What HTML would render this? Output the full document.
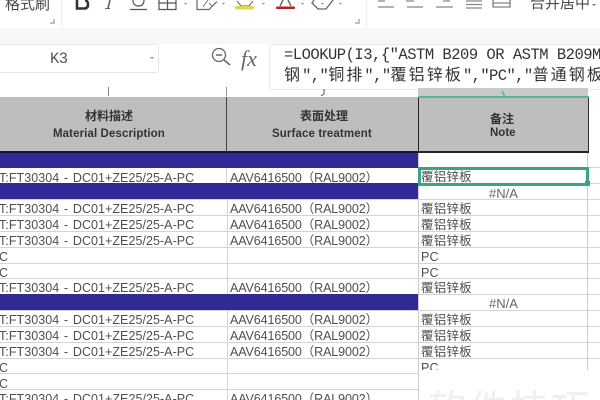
<!DOCTYPE html>
<html><head><meta charset="utf-8">
<style>
html,body{margin:0;padding:0;background:#fff;width:600px;height:400px;overflow:hidden}
#p{position:relative;width:600px;height:400px;overflow:hidden;background:#fff;font-family:"Liberation Sans","Noto Sans CJK SC",sans-serif;filter:blur(.35px)}
#p div{position:absolute;white-space:nowrap}
.m{font-family:"Liberation Mono","Noto Sans CJK SC",monospace;color:#333}
.m span{font-size:16px;letter-spacing:2.1px}
.h{background:#d4d4d4;height:1px;left:0}
.v{background:#d4d4d4;width:1px}
.b{background:#2f2a94;left:0;width:419px}
.a{left:-1px;margin-top:1px;font-size:12.5px;line-height:16px;color:#4f4f4f;letter-spacing:.05px;word-spacing:1.2px;width:225px;overflow:hidden}
.c{left:230px;margin-top:1px;font-size:12.5px;line-height:16px;color:#4f4f4f;letter-spacing:-.1px}
.n{left:421px;margin-top:1px;font-size:12.5px;line-height:16px;color:#4f4f4f;letter-spacing:.2px}
.e{left:489px;font-size:13px;line-height:16px;color:#666}
.t{font-size:11.5px;line-height:14px;font-weight:700;color:#333}
</style></head><body><div id="p">

<!-- ribbon -->
<div style="left:0;top:28px;width:600px;height:16px;background:#f7f7f7"></div>
<div style="left:0;top:0;width:600px;height:28px;background:#fff"></div>
<div style="left:5px;top:-4px;font-size:15px;line-height:18px;color:#4a4a4a">格式刷</div>
<div style="left:61px;top:0;width:1px;height:27px;background:#eee"></div>
<div style="left:366px;top:0;width:1px;height:27px;background:#eee"></div>
<svg style="position:absolute;left:0;top:0" width="600" height="30" fill="none">
<path d="M54 19v4h-4" stroke="#aaa" stroke-width="1.500"/><path d="M359 19v4h-4" stroke="#aaa" stroke-width="1.500"/>
<path d="M77 0v8.500h7q4 0 4-4t-3-4" stroke="#333" stroke-width="2.600"/>
<path d="M110 0l-2 8" stroke="#666" stroke-width="1.600"/><path d="M105 8.500h5" stroke="#666"/>
<path d="M133 0q0 6 5.500 6t5.500-6" stroke="#555" stroke-width="1.200"/><path d="M130 9.500h17" stroke="#555" stroke-width="1.200"/>
<path d="M159 0v9.500h17V0M159 3h17M167.500 0v9.500" stroke="#555" stroke-width="1.200"/>
<path d="M184 3l1.500 1.500L187 3z" fill="#777"/>
<path d="M197 0v9.500h12l8-8" stroke="#666" stroke-width="1.200"/><path d="M203 7l5-7M209 3l3 3" stroke="#777"/>
<path d="M222 3l1.500 1.500L225 3z" fill="#777"/>
<path d="M237 1l4 5h8l4-5" stroke="#777" stroke-width="1.200"/>
<rect x="235" y="6" width="19" height="3.500" rx="1.500" fill="#ded84e"/>
<path d="M262 3l1.500 1.500L265 3z" fill="#777"/>
<path d="M280 6l3-6M291 6l-3-6" stroke="#666" stroke-width="1.400"/>
<rect x="276" y="6.500" width="19" height="2.500" rx="1" fill="#b8202c"/>
<path d="M301 3l1.500 1.500L304 3z" fill="#777"/>
<path d="M314 0l-2 3 6 6h8l7-9" stroke="#666" stroke-width="1.300"/>
<path d="M321 3l1.500 1.500L324 3z" fill="#777"/>
<path d="M339 3l1.500 1.500L342 3z" fill="#777"/>
<path d="M385 1h-7M378 7h16M406 1h8M407 7h16M443 1h7M436 7h17M466 1h16M466 4.500h16M466 8h16" stroke="#888" stroke-width="1.300"/>
<path d="M493 0v7h17V0M493 3h17" stroke="#666" stroke-width="1.100"/>
<path d="M592 4l2 2 2-2z" fill="#777"/>
</svg>
<div style="left:530px;top:-5px;font-size:15px;line-height:18px;color:#4a4a4a">合并居中</div>

<!-- formula bar -->
<div style="left:0;top:44px;width:600px;height:53px;background:#fff"></div>
<div style="left:-3px;top:44px;width:160px;height:27px;border:1px solid #e6e6e6;border-radius:3px;background:#fff"></div>
<div style="left:50px;top:51px;font:15.5px/16px 'Liberation Mono',monospace;letter-spacing:-.5px;color:#555">K3</div>
<svg style="position:absolute;left:0;top:44px" width="270" height="30" fill="none">
<path d="M150 13l2 2 2-2z" fill="#888"/>
<circle cx="219" cy="11" r="6.500" stroke="#666" stroke-width="1.300"/>
<path d="M216 11h6M224 16l6 5" stroke="#666" stroke-width="1.500"/>
</svg>
<div style="left:241px;top:47px;font:italic 22px/24px 'Liberation Serif',serif;color:#666">fx</div>
<div style="left:269px;top:44px;width:340px;height:44px;border:1px solid #e8e8e8;border-radius:3px"></div>
<div class="m" style="left:284px;top:45px;font-size:15.5px;line-height:20px;letter-spacing:-.5px">=LOOKUP(I3,{"ASTM B209 OR ASTM B209M</div>
<div class="m" style="left:284px;top:66px;font-size:15.5px;line-height:20px;letter-spacing:-.6px"><span>钢</span>","<span>铜排</span>","<span>覆铝锌板</span>","PC","<span>普通钢板</span></div>

<!-- col header strip -->
<div style="left:418px;top:88px;width:170px;height:9px;background:#c9cbca"></div>
<div style="left:108px;top:87px;width:1px;height:9px;background:#888"></div>
<div style="left:226px;top:87px;width:1px;height:9px;background:#999"></div>
<svg style="position:absolute;left:318px;top:88px" width="10" height="9" fill="none"><path d="M6 1v5l-3 2" stroke="#555"/></svg>

<!-- table header -->
<div style="left:0;top:97px;width:588px;height:54px;background:#bfbebe"></div>
<div style="left:226px;top:97px;width:1px;height:54px;background:#444"></div>
<div style="left:418px;top:96px;width:1px;height:56px;background:#222"></div>
<div style="left:588px;top:98px;width:1px;height:54px;background:#333"></div>
<div style="left:0;top:151px;width:589px;height:2px;background:#14143f"></div>
<div style="left:418px;top:151px;width:171px;height:2px;background:#222"></div>
<div style="left:418px;top:96px;width:171px;height:2px;background:#55b597"></div>
<svg style="position:absolute;left:498px;top:90px" width="12" height="8" fill="none"><path d="M4 1l3 6" stroke="#55b597" stroke-width="1.500"/></svg>

<div class="t" style="left:85px;top:109px;font-size:12px">材料描述</div>
<div class="t" style="left:53px;top:127px;letter-spacing:.1px">Material Description</div>
<div class="t" style="left:300px;top:109px;font-size:12px">表面处理</div>
<div class="t" style="left:272px;top:127px;letter-spacing:.12px">Surface treatment</div>
<div class="t" style="left:490px;top:112px;font-size:12px">备注</div>
<div class="t" style="left:490px;top:126px">Note</div>

<!-- blue bars -->
<div class="b" style="top:153px;height:15px"></div>
<div class="b" style="top:183px;height:16px"></div>
<div class="b" style="top:294px;height:17px"></div>

<!-- grid horizontal -->
<div class="h" style="top:167px;left:419px;width:181px"></div>
<div class="h" style="top:183px;width:181px;left:419px"></div>
<div class="h" style="top:199px;width:600px"></div>
<div class="h" style="top:215px;width:600px"></div>
<div class="h" style="top:231px;width:600px"></div>
<div class="h" style="top:247px;width:600px"></div>
<div class="h" style="top:263px;width:600px"></div>
<div class="h" style="top:278px;width:600px"></div>
<div class="h" style="top:294px;left:419px;width:181px"></div>
<div class="h" style="top:310px;width:600px"></div>
<div class="h" style="top:326px;width:600px"></div>
<div class="h" style="top:342px;width:600px"></div>
<div class="h" style="top:358px;width:600px"></div>
<div class="h" style="top:373px;width:419px"></div>
<div class="h" style="top:389px;width:419px"></div>

<!-- grid vertical -->
<div class="v" style="left:227px;top:199px;height:95px"></div>
<div class="v" style="left:227px;top:311px;height:89px"></div>
<div class="v" style="left:226px;top:168px;height:15px"></div>
<div class="v" style="left:418px;top:153px;height:247px;background:#ccc"></div>
<div class="v" style="left:587px;top:153px;height:217px;background:#ccc"></div>

<!-- rows -->
<div class="a" style="top:169px">T:FT30304 - DC01+ZE25/25-A-PC</div>
<div class="c" style="top:169px">AAV6416500（RAL9002）</div>
<div class="n" style="top:168px">覆铝锌板</div>
<div class="e" style="top:186px">#N/A</div>

<div class="a" style="top:200px">T:FT30304 - DC01+ZE25/25-A-PC</div>
<div class="c" style="top:200px">AAV6416500（RAL9002）</div>
<div class="n" style="top:200px">覆铝锌板</div>
<div class="a" style="top:216px">T:FT30304 - DC01+ZE25/25-A-PC</div>
<div class="c" style="top:216px">AAV6416500（RAL9002）</div>
<div class="n" style="top:216px">覆铝锌板</div>
<div class="a" style="top:232px">T:FT30304 - DC01+ZE25/25-A-PC</div>
<div class="c" style="top:232px">AAV6416500（RAL9002）</div>
<div class="n" style="top:232px">覆铝锌板</div>
<div class="a" style="top:248px">C</div><div class="n" style="top:248px">PC</div>
<div class="a" style="top:264px">C</div><div class="n" style="top:264px">PC</div>
<div class="a" style="top:279px">T:FT30304 - DC01+ZE25/25-A-PC</div>
<div class="c" style="top:279px">AAV6416500（RAL9002）</div>
<div class="n" style="top:279px">覆铝锌板</div>
<div class="e" style="top:296px">#N/A</div>

<div class="a" style="top:311px">T:FT30304 - DC01+ZE25/25-A-PC</div>
<div class="c" style="top:311px">AAV6416500（RAL9002）</div>
<div class="n" style="top:311px">覆铝锌板</div>
<div class="a" style="top:327px">T:FT30304 - DC01+ZE25/25-A-PC</div>
<div class="c" style="top:327px">AAV6416500（RAL9002）</div>
<div class="n" style="top:327px">覆铝锌板</div>
<div class="a" style="top:343px">T:FT30304 - DC01+ZE25/25-A-PC</div>
<div class="c" style="top:343px">AAV6416500（RAL9002）</div>
<div class="n" style="top:343px">覆铝锌板</div>
<div class="a" style="top:359px">C</div><div class="n" style="top:359px">PC</div>
<div class="a" style="top:375px">C</div>
<div class="a" style="top:390px">T:FT30304 - DC01+ZE25/25-A-PC</div>
<div class="c" style="top:390px">AAV6416500（RAL9002）</div>

<!-- selection -->
<div style="left:418px;top:167px;width:165px;height:13px;border:3px solid #35a584"></div>
<div style="left:585px;top:181px;width:5px;height:5px;background:#35a584"></div>

<!-- watermark cover -->
<div style="left:419px;top:370px;width:181px;height:30px;background:#fff"></div>
<div style="left:428px;top:409px;height:2px;line-height:2px;font-size:38px;color:#efefef;letter-spacing:3px">软件技巧</div>
</div></body></html>
